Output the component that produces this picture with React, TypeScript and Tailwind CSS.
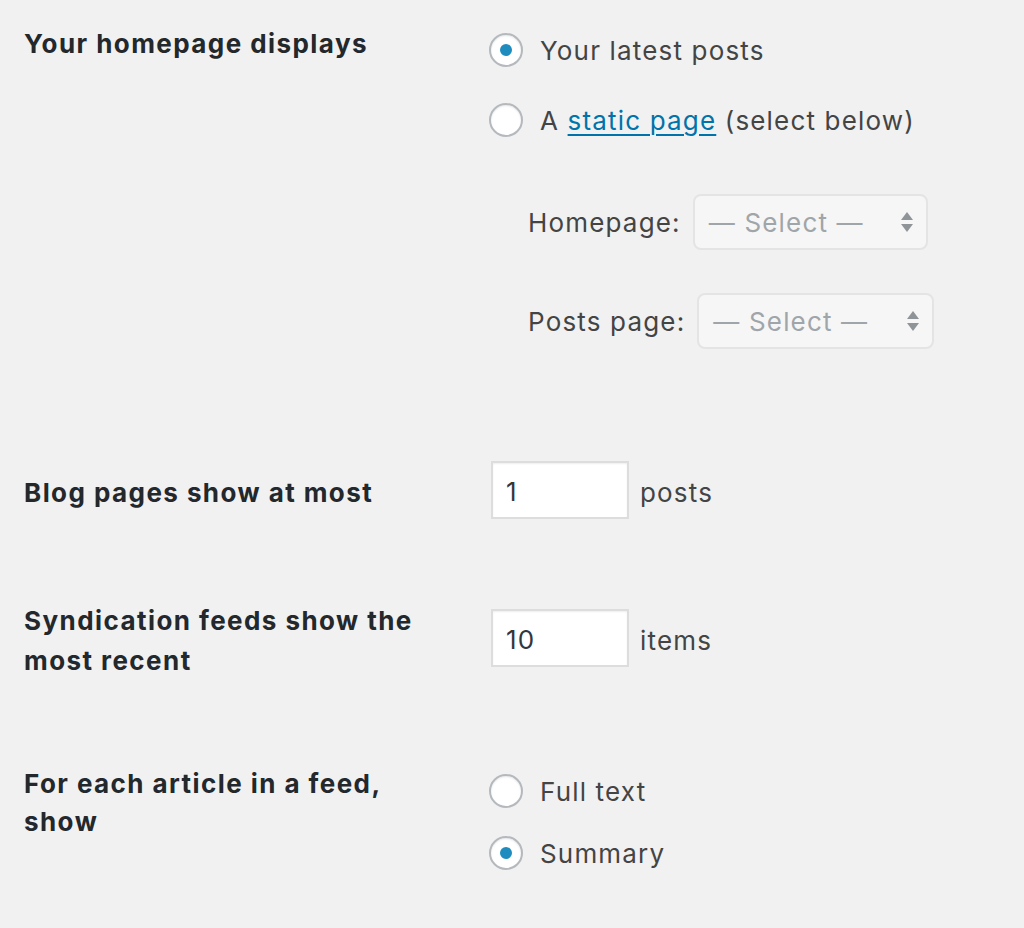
import React from 'react'

const font = { fontFamily: 'Inter, "Liberation Sans", Arial, sans-serif' }

const Radio: React.FC<{ checked?: boolean; children: React.ReactNode }> = ({ checked, children }) => (
  <label className="flex items-center h-[40px] text-[26px] tracking-[0.045em] text-[#444]">
    <span className="w-[34px] h-[34px] rounded-full border-2 border-[#b4b9be] bg-white shadow-[inset_0_1px_2px_rgba(0,0,0,0.1)] flex items-center justify-center shrink-0">
      {checked && <span className="w-[12px] h-[12px] rounded-full bg-[#1e8cbe]" />}
    </span>
    <span className="ml-[17px]">{children}</span>
  </label>
)

const Select: React.FC<{ width: string }> = ({ width }) => (
  <div
    className={`${width} h-[56px] rounded-[8px] border-2 border-[#e4e4e4] bg-[#f6f6f6] flex items-center justify-between pl-[14px] pr-[12px]`}
  >
    <span className="text-[26px] tracking-[0.045em] text-[#a0a5aa]">— Select —</span>
    <svg width="14" height="24" viewBox="0 0 14 24">
      <path d="M7 2 L13 10 L1 10 Z" fill="#8f9499" />
      <path d="M1 14 L13 14 L7 22 Z" fill="#8f9499" />
    </svg>
  </div>
)

const NumberInput: React.FC<{ value: string }> = ({ value }) => (
  <div className="w-[138px] h-[58px] bg-white border-2 border-[#dddddd] shadow-[inset_0_1px_2px_rgba(0,0,0,0.07)] flex items-center pl-[13px] pt-[2px] text-[26px] tracking-[0.045em] text-[#32373c]">
    {value}
  </div>
)

const label = 'shrink-0 text-[26px] font-bold tracking-[0.055em] text-[#23282d]'
const body = 'text-[26px] tracking-[0.045em] text-[#444]'

export default function App() {
  return (
    <div className="min-h-[928px] w-[1024px] bg-[#f1f1f1] pl-[24px]" style={font}>
      {/* homepage displays */}
      <div className="flex items-start pt-[24px]">
        <div className={`w-[465px] leading-[40px] ${label}`}>Your homepage displays</div>
        <div className="pt-[6px] flex flex-col">
          <Radio checked>Your latest posts</Radio>
          <div className="mt-[30px]">
            <Radio>
              A{' '}
              <a className="text-[#0073aa] underline underline-offset-[4px] decoration-2">static page</a> (select
              below)
            </Radio>
          </div>
          <div className="mt-[54px] ml-[39px] flex items-center">
            <span className={`${body} mr-[12px]`}>Homepage:</span>
            <Select width="w-[235px]" />
          </div>
          <div className="mt-[43px] ml-[39px] flex items-center">
            <span className={`${body} mr-[12px]`}>Posts page:</span>
            <Select width="w-[237px]" />
          </div>
        </div>
      </div>

      {/* blog pages */}
      <div className="flex items-center mt-[112px]">
        <div className={`w-[467px] leading-[40px] pt-[6px] ${label}`}>Blog pages show at most</div>
        <NumberInput value="1" />
        <span className={`ml-[11px] pt-[4px] ${body}`}>posts</span>
      </div>

      {/* syndication */}
      <div className="flex items-start mt-[82px]">
        <div className={`w-[467px] leading-[40px] ${label}`}>
          Syndication feeds show the
          <br />
          most recent
        </div>
        <div className="mt-[8px] flex items-center">
          <NumberInput value="10" />
          <span className={`ml-[11px] pt-[4px] ${body}`}>items</span>
        </div>
      </div>

      {/* feed article */}
      <div className="flex items-start mt-[84px]">
        <div className={`w-[465px] leading-[38px] ${label}`}>
          For each article in a feed,
          <br />
          show
        </div>
        <div className="pt-[6px] flex flex-col">
          <Radio>Full text</Radio>
          <div className="mt-[22px]">
            <Radio checked>Summary</Radio>
          </div>
        </div>
      </div>
    </div>
  )
}
